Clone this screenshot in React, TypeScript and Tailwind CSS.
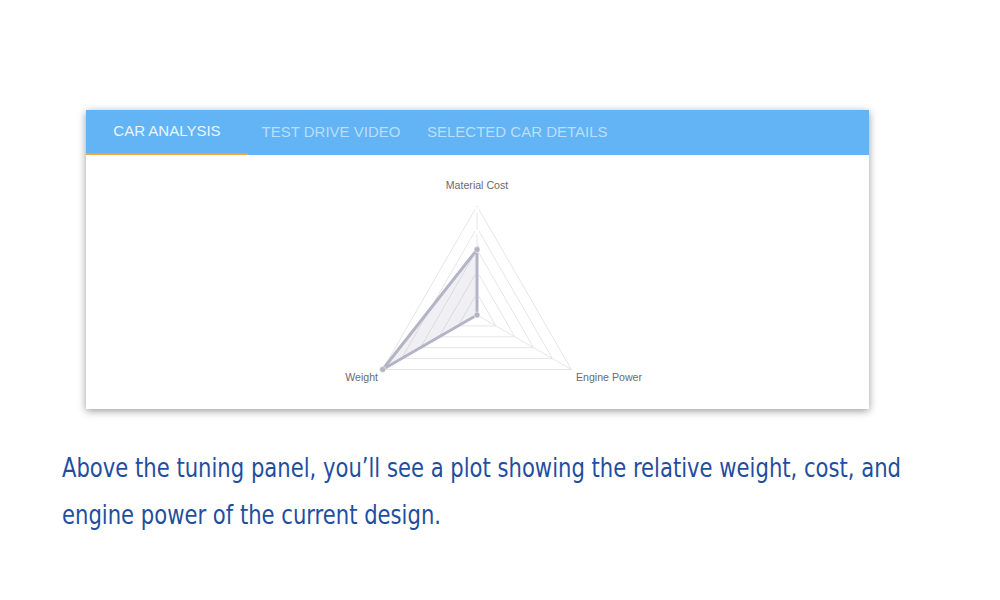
import React from "react";

const CX = 391;
const CY = 160;
const R = 109;
const angles = [-90, 150, 30]; // Material Cost (top), Weight (bottom-left), Engine Power (bottom-right)

function pt(i: number, v: number) {
  const a = (angles[i] * Math.PI) / 180;
  return [CX + Math.cos(a) * R * v, CY + Math.sin(a) * R * v];
}

function poly(vals: number[]) {
  return vals.map((v, i) => pt(i, v).map((n) => n.toFixed(1)).join(",")).join(" ");
}

function Radar() {
  const levels = [0.2, 0.4, 0.6, 0.8, 1];
  const data = [0.6, 1, 0];
  return (
    <svg width="783" height="254" viewBox="0 0 783 254" className="block">
      {levels.map((l) => (
        <polygon key={l} points={poly([l, l, l])} fill="none" stroke="#e6e6e6" strokeWidth="1" />
      ))}
      {[0, 1, 2].map((i) => {
        const [x, y] = pt(i, 1);
        return <line key={i} x1={CX} y1={CY} x2={x} y2={y} stroke="#e6e6e6" strokeWidth="1" />;
      })}
      {levels.map((l) => {
        const [x, y] = pt(0, l);
        return <rect key={"b" + l} x={x - 2} y={y + 1} width="4" height="6" fill="#fff" />;
      })}
      <polygon
        points={poly(data)}
        fill="rgba(179,181,198,0.2)"
        stroke="rgba(179,181,198,1)"
        strokeWidth="3"
        strokeLinejoin="miter"
      />
      {data.map((v, i) => {
        const [x, y] = pt(i, v);
        return <circle key={"p" + i} cx={x} cy={y} r="3" fill="rgba(179,181,198,1)" stroke="#fff" strokeWidth="0.5" />;
      })}
      <g fontFamily="'Liberation Sans', Arial, sans-serif" fontSize="10.6" fill="#6b6b6b">
        <text x={CX} y={34} textAnchor="middle">Material Cost</text>
        <text x={292} y={226} textAnchor="end">Weight</text>
        <text x={490} y={226} textAnchor="start">Engine Power</text>
      </g>
    </svg>
  );
}

export default function App() {
  return (
    <div className="w-[1000px] h-[600px] bg-white overflow-hidden relative">
      <div className="pt-[110px] pl-[86px]">
        <div className="w-[783px] h-[299px] bg-white shadow-[0_2px_8px_rgba(0,0,0,0.4)] flex flex-col">
          <div className="h-[45px] bg-[#62b4f5] flex items-stretch font-['Liberation_Sans',Arial,sans-serif] text-[15px] uppercase">
            <div className="w-[162px] flex items-center justify-center text-[#eaf5fe] border-b-2 border-[#f9a135]">
              CAR ANALYSIS
            </div>
            <div className="w-[166px] flex items-center justify-center text-[#bcdefa]">TEST DRIVE VIDEO</div>
            <div className="flex items-center pl-[13px] text-[#bcdefa]">SELECTED CAR DETAILS</div>
          </div>
          <div className="flex-1">
            <Radar />
          </div>
        </div>
      </div>
      <div className="pl-[62px] pt-[35px] font-['Liberation_Sans_Narrow','DejaVu_Sans_Condensed',sans-serif] text-[27px] leading-[47px] text-[#1f4e9f] whitespace-nowrap">
        <div className="origin-left scale-x-[0.87]">
          Above the tuning panel, you’ll see a plot showing the relative weight, cost, and
        </div>
        <div className="origin-left scale-x-[0.87]">engine power of the current design.</div>
      </div>
    </div>
  );
}
